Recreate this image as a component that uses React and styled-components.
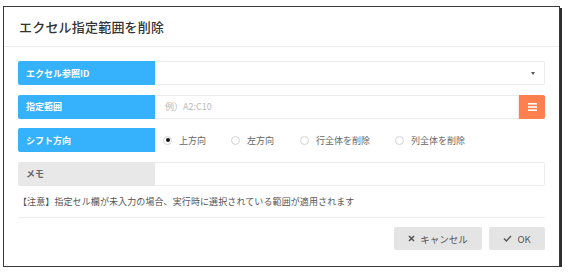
import React from 'react';
import styled, { createGlobalStyle } from 'styled-components';

const GlobalStyle = createGlobalStyle`
  html, body {
    margin: 0;
    padding: 0;
    background: #fff;
  }
  body {
    font-family: "Noto Sans CJK JP", "Noto Sans", sans-serif;
  }
`;

export const Dialog = styled.section`
  box-sizing: border-box;
  width: 557px;
  height: 261px;
  margin: 6px 0 0 3px;
  background: #fff;
  border: 1px solid #3a3a3a;
  box-shadow: 2px 2px 0 #2e2e2e;
  display: flex;
  flex-direction: column;
`;

export const Header = styled.header`
  height: 39px;
  display: flex;
  align-items: center;
  padding-left: 15px;
  border-bottom: 1px solid #ececec;
`;

export const Title = styled.h1`
  margin: 0;
  font-size: 13px;
  font-weight: 500;
  color: #333;
  letter-spacing: 0.2px;
`;

export const Body = styled.div`
  padding: 14px 14px 0 14px;
  display: flex;
  flex-direction: column;
  gap: 9.5px;
`;

export const Row = styled.div`
  display: flex;
  height: 24px;
`;

export const Label = styled.div`
  box-sizing: border-box;
  flex: 0 0 137px;
  display: flex;
  align-items: center;
  padding-left: 8px;
  border-radius: 2px 0 0 2px;
  font-size: 9px;
  font-weight: 700;
  background: ${p => (p.$muted ? '#e8e8e8' : '#36b2fc')};
  color: ${p => (p.$muted ? '#666' : '#fff')};
`;

export const Field = styled.div`
  box-sizing: border-box;
  flex: 1;
  position: relative;
  display: flex;
  align-items: center;
  padding-left: 10px;
  border: 1px solid #ececec;
  border-left: none;
  border-radius: ${p => (p.$square ? '0' : '0 2px 2px 0')};
  font-size: 9px;
  color: #bbb;
`;

export const Caret = styled.span`
  position: absolute;
  right: 9px;
  top: 10px;
  width: 0;
  height: 0;
  border-left: 2.5px solid transparent;
  border-right: 2.5px solid transparent;
  border-top: 3px solid #555;
`;

export const MenuButton = styled.button`
  flex: 0 0 26px;
  border: none;
  border-radius: 0 2px 2px 0;
  background: #ff7f4f;
  display: flex;
  align-items: center;
  justify-content: center;
  padding: 0;
`;

export const Radios = styled.div`
  flex: 1;
  display: flex;
  align-items: center;
  padding-left: 8px;
`;

export const RadioItem = styled.label`
  display: flex;
  align-items: center;
  width: ${p => p.$w}px;
  font-size: 9px;
  color: #666;
`;

export const RadioDot = styled.span`
  box-sizing: border-box;
  width: 9px;
  height: 9px;
  border-radius: 50%;
  border: 1px solid #d4d4d4;
  margin-right: 7px;
  display: flex;
  align-items: center;
  justify-content: center;
  &::after {
    content: '';
    width: 4px;
    height: 4px;
    border-radius: 50%;
    background: ${p => (p.$checked ? '#111' : 'transparent')};
  }
`;

export const Note = styled.p`
  margin: 0;
  padding-bottom: 8px;
  border-bottom: 1px solid #ececec;
  font-size: 9px;
  color: #555;
  line-height: 14px;
  letter-spacing: 0.1px;
`;

export const Footer = styled.footer`
  display: flex;
  justify-content: flex-end;
  gap: 7px;
  padding: 9px 14px 0 0;
`;

export const Button = styled.button`
  height: 23px;
  width: ${p => p.$w}px;
  border: none;
  border-radius: 2px;
  background: #e4e4e4;
  color: #555;
  font-family: inherit;
  font-size: 9.5px;
  display: flex;
  align-items: center;
  justify-content: center;
  gap: 5px;
  padding: 0;
`;

const radios = [
  { text: '上方向', w: 68, checked: true },
  { text: '左方向', w: 69 },
  { text: '行全体を削除', w: 95 },
  { text: '列全体を削除', w: 90 },
];

export default function App() {
  return (
    <>
      <GlobalStyle />
      <Dialog>
        <Header>
          <Title>エクセル指定範囲を削除</Title>
        </Header>
        <Body>
          <Row>
            <Label>エクセル参照ID</Label>
            <Field>
              <Caret />
            </Field>
          </Row>
          <Row>
            <Label>指定範囲</Label>
            <Field $square>例）A2:C10</Field>
            <MenuButton>
              <svg width="9" height="8" viewBox="0 0 9 8">
                <rect x="0" y="0" width="9" height="1.6" fill="#fff" />
                <rect x="0" y="3.2" width="9" height="1.6" fill="#fff" />
                <rect x="0" y="6.4" width="9" height="1.6" fill="#fff" />
              </svg>
            </MenuButton>
          </Row>
          <Row>
            <Label>シフト方向</Label>
            <Radios>
              {radios.map(r => (
                <RadioItem key={r.text} $w={r.w}>
                  <RadioDot $checked={r.checked} />
                  {r.text}
                </RadioItem>
              ))}
            </Radios>
          </Row>
          <Row>
            <Label $muted>メモ</Label>
            <Field />
          </Row>
          <Note>【注意】指定セル欄が未入力の場合、実行時に選択されている範囲が適用されます</Note>
        </Body>
        <Footer>
          <Button $w={88}>
            <svg width="7" height="7" viewBox="0 0 7 7">
              <path d="M1 1 L6 6 M6 1 L1 6" stroke="#555" strokeWidth="1.6" />
            </svg>
            キャンセル
          </Button>
          <Button $w={56}>
            <svg width="9" height="7" viewBox="0 0 9 7">
              <path d="M1 3.6 L3.4 6 L8 1" stroke="#555" strokeWidth="1.4" fill="none" />
            </svg>
            OK
          </Button>
        </Footer>
      </Dialog>
    </>
  );
}
